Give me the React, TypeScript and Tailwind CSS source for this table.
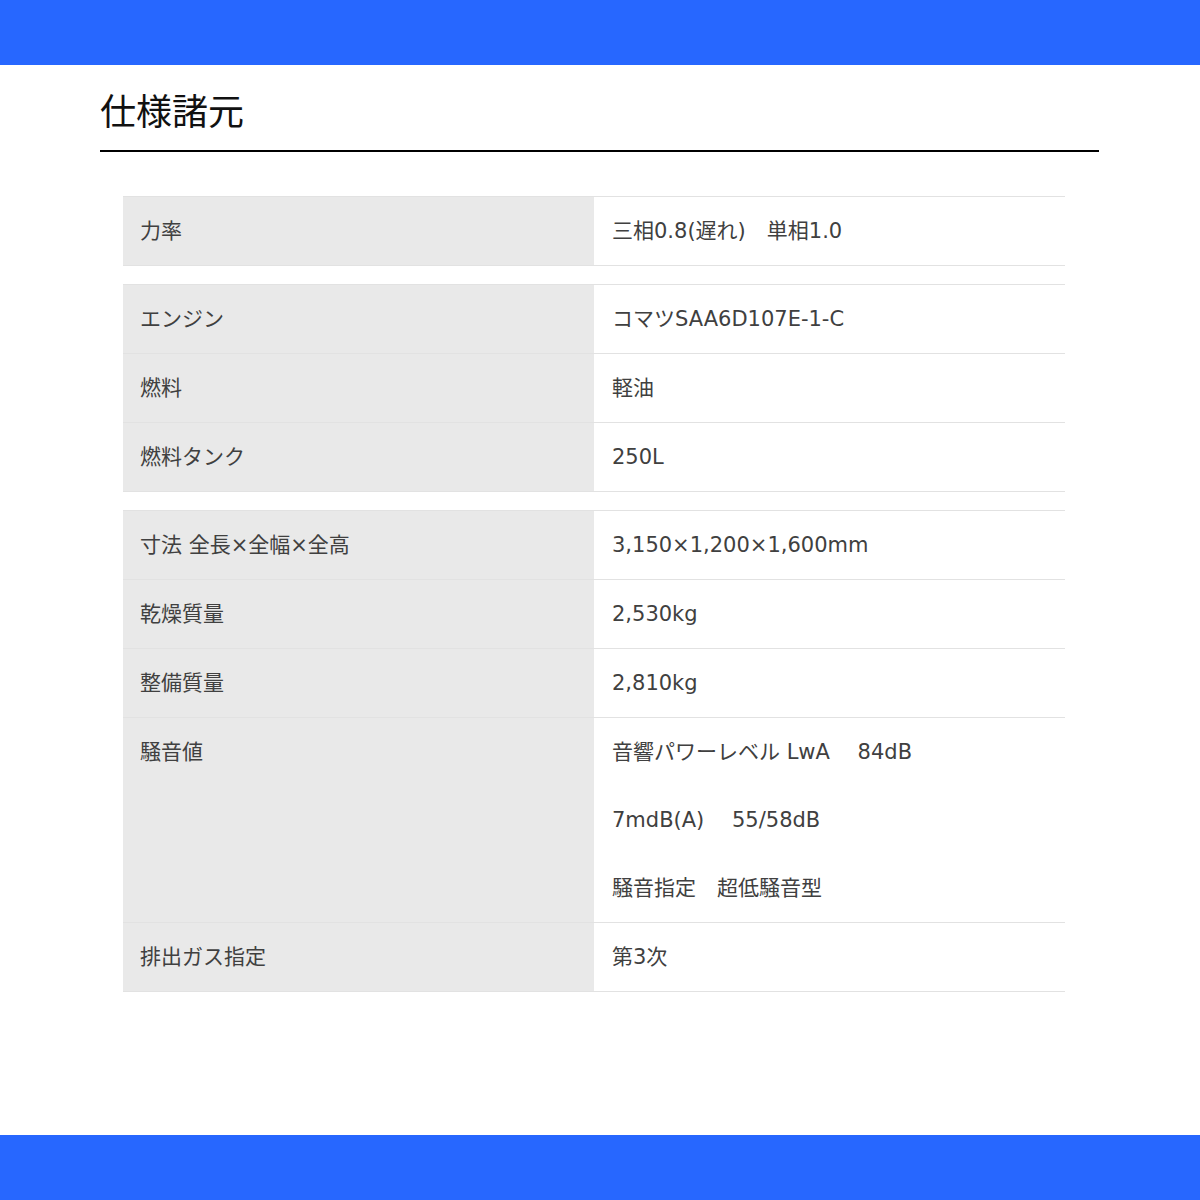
import React from "react";

type Row = { label: string; values: string[] };

const groups: Row[][] = [
  [{ label: "力率", values: ["三相0.8(遅れ)　単相1.0"] }],
  [
    { label: "エンジン", values: ["コマツSAA6D107E-1-C"] },
    { label: "燃料", values: ["軽油"] },
    { label: "燃料タンク", values: ["250L"] },
  ],
  [
    { label: "寸法 全長×全幅×全高", values: ["3,150×1,200×1,600mm"] },
    { label: "乾燥質量", values: ["2,530kg"] },
    { label: "整備質量", values: ["2,810kg"] },
    {
      label: "騒音値",
      values: ["音響パワーレベル LwA　 84dB", "7mdB(A)　 55/58dB", "騒音指定　超低騒音型"],
    },
    { label: "排出ガス指定", values: ["第3次"] },
  ],
];

const font = {
  fontFamily: '"DejaVu Sans", "Noto Sans CJK JP", sans-serif',
};

export default function App() {
  return (
    <div className="min-h-[1200px] flex flex-col bg-white">
      <div className="h-[65px] bg-[#2767ff] shrink-0" />
      <main className="flex-1 px-[100px] pt-[26px]">
        <h1
          className="text-[36px] leading-[36px] text-[#111] pb-[23px] border-b-2 border-black w-[999px]"
          style={{ fontFamily: '"Noto Sans CJK JP", sans-serif' }}
        >
          仕様諸元
        </h1>
        <div className="mt-[44px] ml-[23px] w-[942px] flex flex-col gap-[18px]">
          {groups.map((g, gi) => (
            <div key={gi} className="border-b border-[#e2e2e2]">
              {g.map((r, ri) => (
                <div
                  key={ri}
                  className="grid grid-cols-[471px_471px] border-t border-[#e2e2e2] text-[21px] text-[#404040]"
                  style={font}
                >
                  <div className="bg-[#e9e9e9] px-[17px]">
                    <div className="h-[68px] pt-[2px] flex items-center">{r.label}</div>
                  </div>
                  <div className="bg-white px-[18px]">
                    {r.values.map((v, vi) => (
                      <div key={vi} className="h-[68px] pt-[2px] flex items-center whitespace-pre">
                        {v}
                      </div>
                    ))}
                  </div>
                </div>
              ))}
            </div>
          ))}
        </div>
      </main>
      <div className="h-[65px] bg-[#2767ff] shrink-0" />
    </div>
  );
}
